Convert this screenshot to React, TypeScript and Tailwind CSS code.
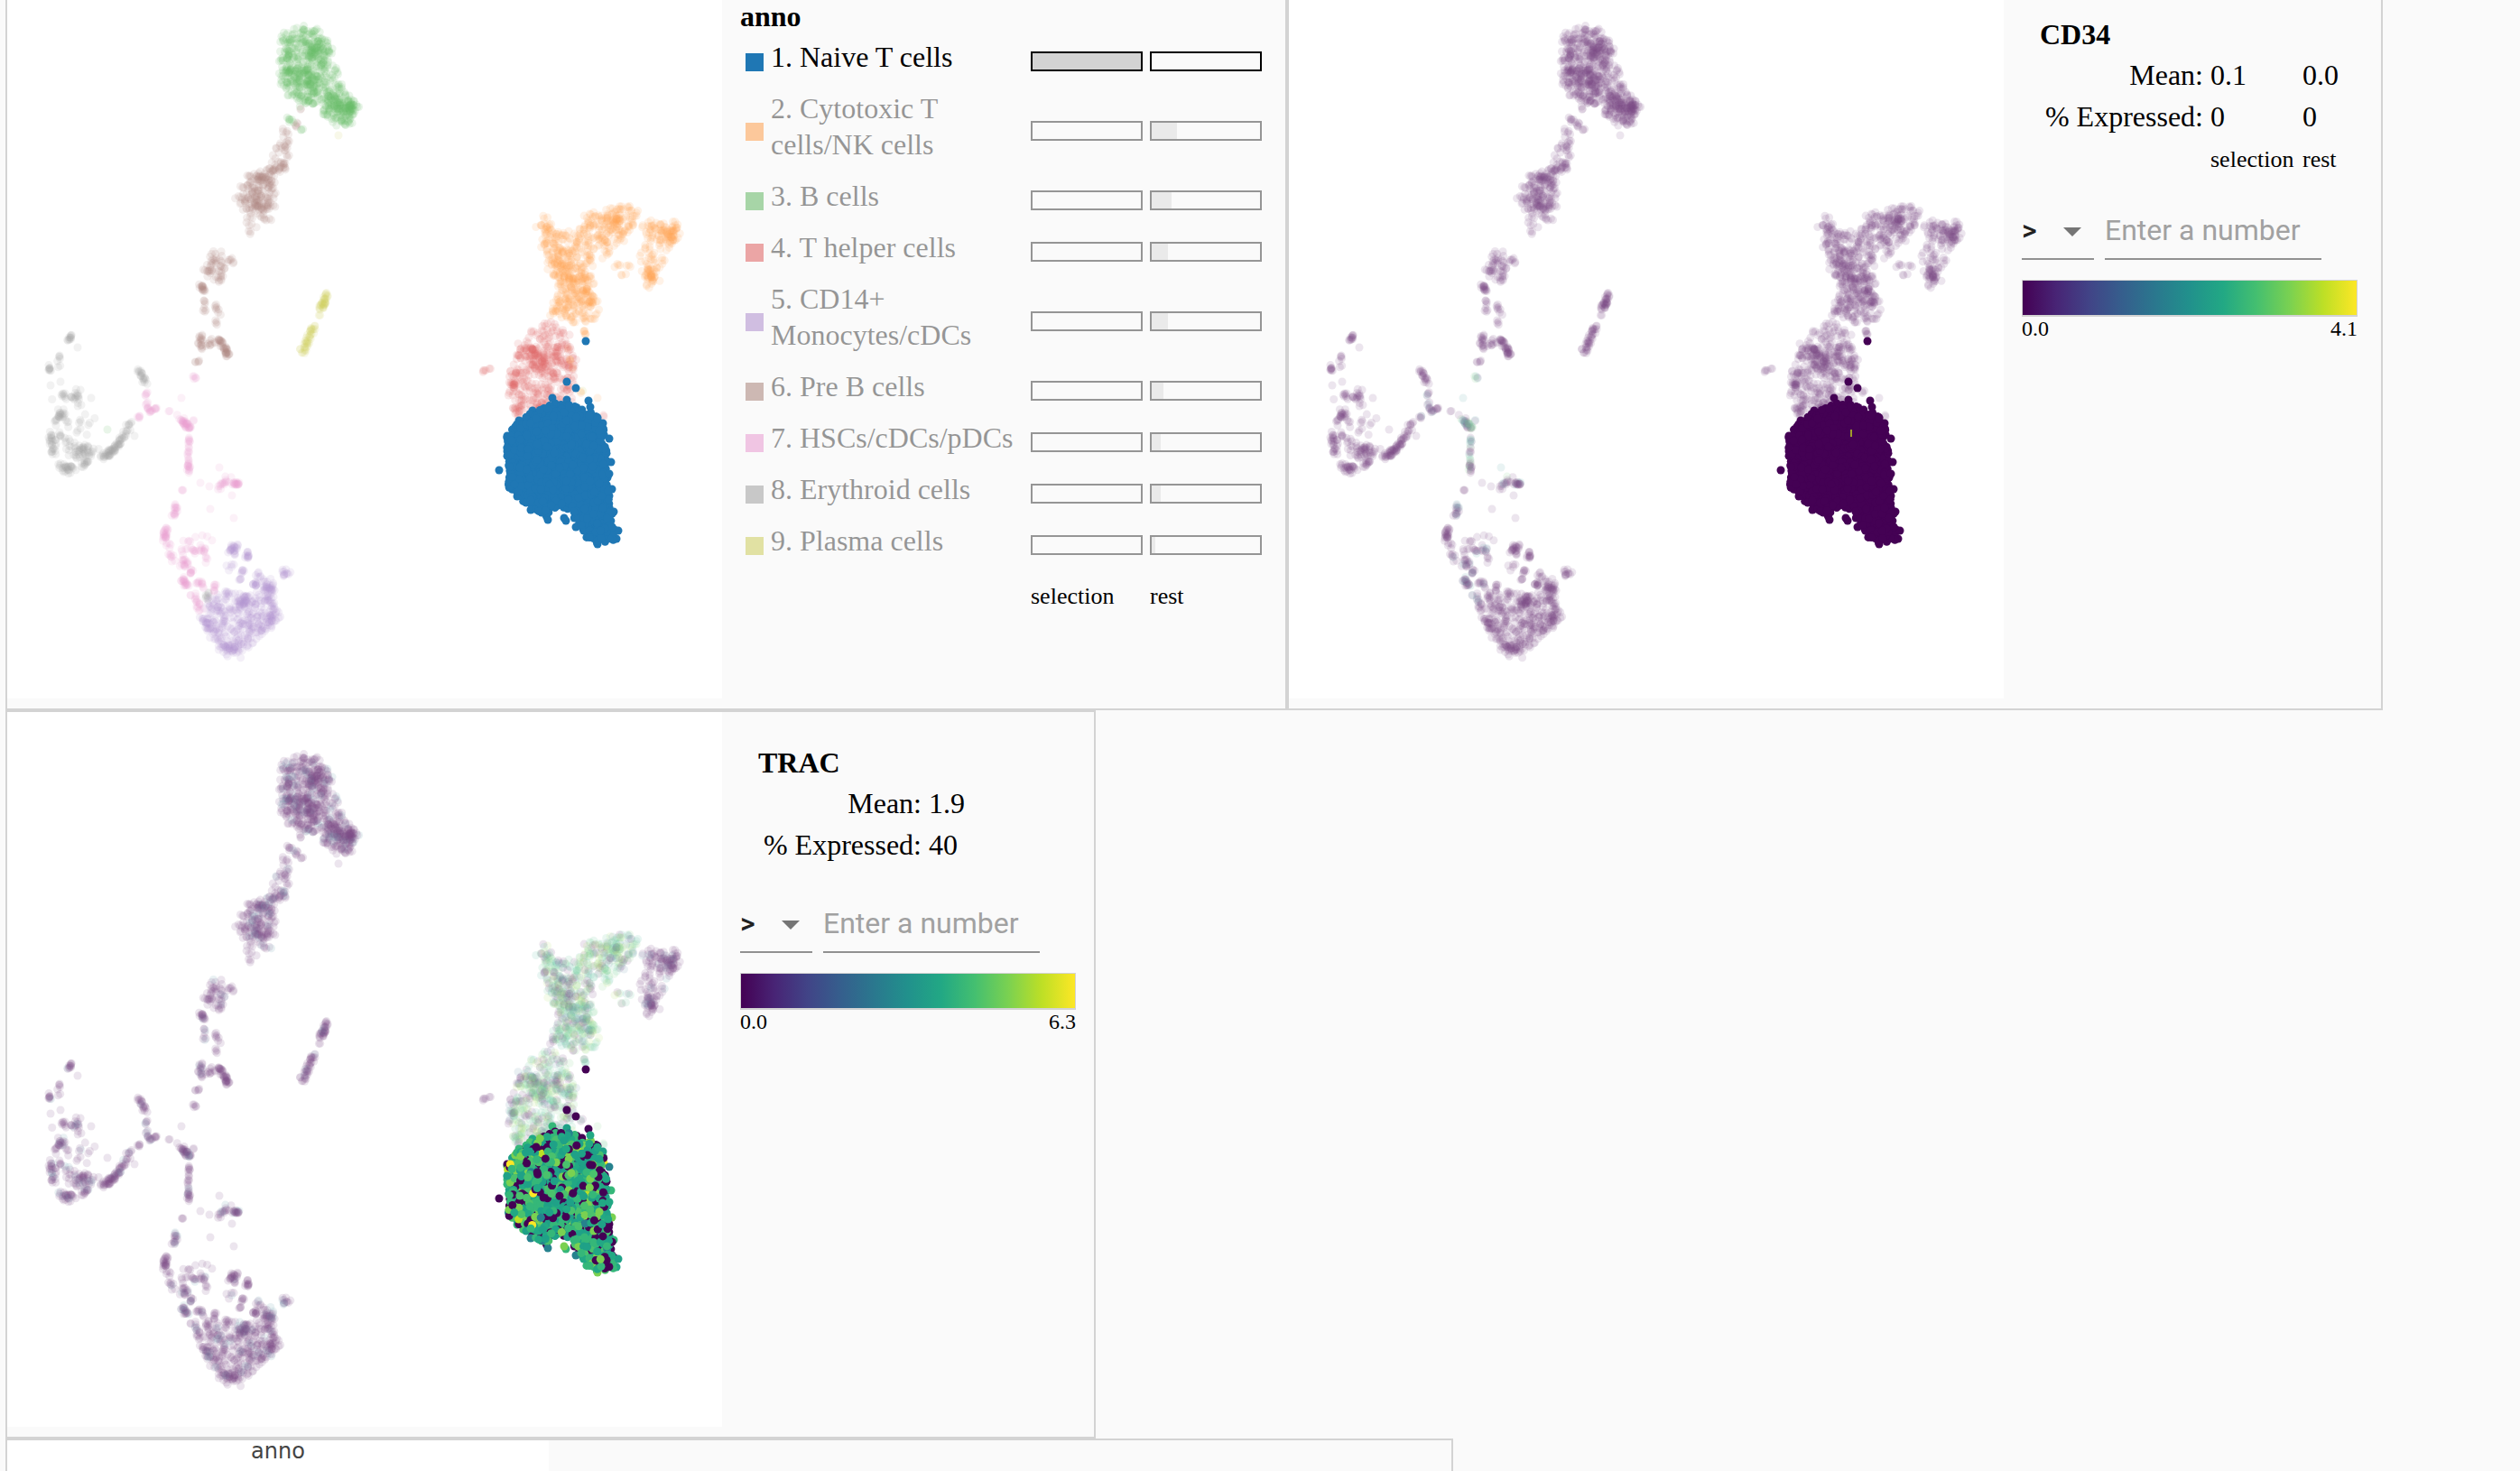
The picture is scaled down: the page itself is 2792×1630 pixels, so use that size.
import React from "react";

type Kind = "naive" | "cytotoxic" | "bcell" | "helper" | "mono" | "preb" | "hsc" | "eryth" | "plasma";
type Pt = { x: number; y: number; kind: Kind };

function makeRandom(seed: number) {
  let a = seed;
  return () => {
    a = (a + 0x6d2b79f5) | 0;
    let t = Math.imul(a ^ (a >>> 15), 1 | a);
    t = (t + Math.imul(t ^ (t >>> 7), 61 | t)) ^ t;
    return ((t ^ (t >>> 14)) >>> 0) / 4294967296;
  };
}

/* Capsules: x1, y1, x2, y2, spread, count */
const STROKES: [Kind, number[][]][] = [
  ["bcell", [[387, 115, 388, 124, 6, 30], [321, 79, 322, 80, 2, 7], [334, 85, 345, 95, 8, 20], [345, 45, 352, 60, 9, 24], [350, 100, 375, 112, 8, 20], [320, 128, 322, 135, 5, 7], [334, 143, 334, 143, 2, 3], [119, 476, 119, 476, 0, 1]]],
  ["preb", [[272, 220, 295, 230, 5, 28], [286, 200, 300, 196, 4, 14], [275, 258, 278, 258, 2, 3], [329, 138, 327, 139, 3, 5], [333, 121, 333, 121, 1, 2], [260, 284, 252, 297, 4, 7], [222, 315, 225, 324, 3, 16], [223, 333, 226, 345, 4, 8], [238, 337, 244, 350, 3, 8], [239, 355, 241, 364, 1, 4], [221, 367, 223, 387, 3, 18], [233, 378, 233, 380, 6, 10], [243, 377, 253, 394, 3, 38], [219, 399, 218, 401, 2, 5]]],
  ["plasma", [[362, 326, 356, 341, 3, 34], [354, 349, 354, 349, 1, 2], [347, 363, 335, 389, 4, 42], [375, 150, 375, 150, 0, 1], [645, 433, 645, 433, 1, 1]]],
  ["eryth", [[80, 372, 74, 379, 2, 12], [86, 385, 86, 385, 0, 1], [64, 394, 65, 406, 3, 7], [55, 406, 55, 412, 2, 9], [56, 427, 56, 427, 0, 1], [67, 423, 67, 423, 0, 1], [70, 438, 70, 438, 3, 7], [84, 435, 84, 447, 6, 18], [101, 441, 101, 441, 0, 1], [70, 457, 60, 470, 4, 20], [57, 480, 60, 503, 4, 28], [68, 483, 68, 483, 2, 4], [64, 515, 80, 522, 5, 30], [78, 497, 105, 505, 10, 52], [90, 518, 97, 510, 3, 11], [112, 507, 127, 498, 4, 34], [127, 498, 139, 478, 3, 30], [139, 478, 149, 465, 4, 9], [149, 483, 149, 483, 0, 1], [153, 408, 161, 425, 3, 20], [230, 659, 231, 662, 4, 8]]],
  ["hsc", [[163, 434, 160, 440, 1, 5], [154, 461, 153, 462, 2, 5], [163, 447, 165, 456, 2, 10], [165, 456, 174, 452, 2, 8], [186, 455, 188, 456, 1, 2], [197, 459, 210, 476, 3, 34], [209, 483, 209, 524, 2, 30], [214, 466, 214, 466, 1, 2], [202, 541, 202, 546, 1, 3], [197, 557, 191, 574, 3, 16], [184, 586, 182, 598, 3, 22], [184, 600, 191, 620, 4, 14], [203, 612, 228, 607, 5, 22], [200, 598, 232, 597, 4, 8], [228, 618, 228, 625, 2, 4], [203, 625, 205, 623, 5, 16], [212, 633, 212, 633, 3, 8], [203, 642, 207, 651, 3, 20], [217, 643, 226, 650, 3, 11], [214, 658, 223, 676, 4, 18], [238, 645, 238, 655, 2, 8], [258, 536, 264, 536, 2, 18], [243, 543, 253, 530, 4, 16], [243, 518, 243, 518, 0, 1], [222, 535, 222, 535, 0, 1], [232, 539, 232, 539, 0, 1], [233, 564, 233, 564, 0, 1], [257, 549, 257, 549, 0, 1], [259, 574, 259, 574, 0, 1], [201, 441, 201, 441, 0, 1], [214, 412, 216, 419, 2, 5]]],
  ["mono", [[261, 601, 257, 614, 5, 24], [273, 615, 273, 615, 4, 11], [268, 634, 268, 634, 3, 6], [250, 630, 283, 622, 7, 6], [262, 640, 270, 645, 4, 4], [287, 637, 287, 637, 4, 6], [316, 634, 317, 634, 5, 12], [282, 647, 282, 647, 3, 11], [297, 645, 300, 672, 7, 50], [266, 668, 279, 664, 6, 30], [248, 715, 266, 712, 11, 22], [226, 685, 233, 698, 4, 22], [302, 680, 299, 690, 5, 20], [253, 656, 253, 656, 1, 1]]],
  ["cytotoxic", [[741, 252, 744, 268, 6, 26], [719, 296, 721, 314, 6, 34], [624, 285, 632, 300, 9, 26], [634, 306, 650, 330, 9, 24], [676, 247, 690, 243, 5, 16], [645, 362, 648, 372, 3, 6], [643, 433, 645, 438, 1, 2], [662, 441, 662, 441, 0, 1], [630, 380, 633, 408, 3, 5]]],
  ["helper", [[584, 387, 602, 405, 8, 46], [570, 424, 570, 428, 3, 10], [533, 413, 548, 408, 2, 6], [668, 460, 669, 463, 1, 2]]],
];

/* Regions: number of points, then the outline as x,y pairs */
const REGIONS: [Kind, number, number[]][] = [
  ["bcell", 450, [313, 37, 332, 30, 353, 32, 362, 42, 370, 63, 373, 80, 363, 97, 350, 115, 333, 115, 320, 103, 312, 90, 310, 53]],
  ["bcell", 165, [363, 97, 380, 92, 391, 107, 395, 120, 388, 137, 373, 140, 357, 128, 360, 113]],
  ["preb", 62, [315, 143, 323, 143, 322, 160, 315, 187, 300, 198, 297, 190, 303, 170, 311, 155]],
  ["preb", 150, [270, 197, 283, 193, 297, 187, 306, 207, 301, 230, 295, 247, 287, 251, 275, 247, 268, 230, 263, 217]],
  ["preb", 52, [237, 275, 240, 275, 248, 292, 249, 308, 238, 316, 227, 308, 228, 297, 233, 288]],
  ["eryth", 26, [60, 430, 85, 440, 107, 467, 113, 490, 75, 500, 60, 470]],
  ["mono", 300, [230, 660, 270, 653, 297, 660, 308, 677, 304, 695, 292, 707, 274, 720, 260, 728, 245, 722, 229, 702, 220, 680]],
  ["cytotoxic", 400, [595, 238, 607, 243, 620, 257, 640, 257, 653, 277, 657, 313, 663, 352, 643, 358, 610, 347, 617, 320, 607, 287, 598, 253]],
  ["cytotoxic", 175, [643, 243, 657, 237, 677, 230, 703, 227, 707, 247, 690, 267, 663, 275, 653, 280, 643, 257]],
  ["cytotoxic", 70, [710, 248, 743, 243, 755, 250, 750, 262, 743, 273, 723, 266]],
  ["cytotoxic", 42, [713, 265, 735, 268, 736, 285, 728, 310, 715, 315, 708, 300]],
  ["cytotoxic", 16, [665, 275, 690, 285, 705, 295, 700, 308, 680, 312, 668, 300]],
  ["helper", 400, [610, 353, 627, 363, 634, 387, 638, 413, 633, 443, 590, 460, 575, 465, 569, 460, 564, 443, 565, 413, 575, 380, 590, 367]],
];

const SELECTED_OUTLINE = [588, 457, 610, 449, 628, 446, 642, 451, 655, 456, 663, 462, 669, 472, 672, 488, 673, 513, 674, 543, 678, 567, 683, 592, 679, 600, 662, 602, 647, 594, 640, 580, 630, 566, 616, 563, 605, 574, 588, 563, 574, 551, 562, 538, 560, 513, 561, 485, 573, 467];
const SELECTED_EDGE = [562, 483, 575, 466, 590, 455, 612, 441, 615, 447, 628, 443, 652, 444, 654, 451, 649, 378, 628, 423, 638, 430, 553, 521, 675, 486, 677, 512, 675, 525, 678, 542, 680, 567, 685, 588, 683, 597, 662, 603, 625, 574, 627, 577, 638, 584, 588, 565, 607, 576, 573, 550, 668, 469, 562, 500, 564, 538];

function inside(x: number, y: number, p: number[]) {
  let hit = false;
  for (let i = 0, j = p.length - 2; i < p.length; j = i, i += 2) {
    const xi = p[i], yi = p[i + 1], xj = p[j], yj = p[j + 1];
    if (yi > y !== yj > y && x < ((xj - xi) * (y - yi)) / (yj - yi) + xi) hit = !hit;
  }
  return hit;
}

function shuffle<T>(list: T[], rnd: () => number) {
  for (let i = list.length - 1; i > 0; i--) {
    const j = Math.floor(rnd() * (i + 1));
    [list[i], list[j]] = [list[j], list[i]];
  }
  return list;
}

function bounds(p: number[]) {
  const xs = p.filter((_, i) => i % 2 === 0);
  const ys = p.filter((_, i) => i % 2 === 1);
  return [Math.min(...xs), Math.min(...ys), Math.max(...xs), Math.max(...ys)];
}

function buildPoints() {
  const rnd = makeRandom(7);
  const rest: Pt[] = [];
  for (const [kind, count, outline] of REGIONS) {
    const [x0, y0, x1, y1] = bounds(outline);
    let n = 0;
    while (n < count) {
      const x = x0 + rnd() * (x1 - x0);
      const y = y0 + rnd() * (y1 - y0);
      if (inside(x, y, outline)) {
        rest.push({ x: x + (rnd() - 0.5) * 8, y: y + (rnd() - 0.5) * 8, kind });
        n++;
      }
    }
  }
  for (const [kind, list] of STROKES) {
    for (const [x1, y1, x2, y2, spread, count] of list) {
      for (let i = 0; i < count; i++) {
        const t = rnd();
        const a = rnd() * Math.PI * 2;
        const r = Math.sqrt(rnd()) * spread;
        rest.push({ x: x1 + (x2 - x1) * t + Math.cos(a) * r, y: y1 + (y2 - y1) * t + Math.sin(a) * r, kind });
      }
    }
  }
  const picked: Pt[] = [];
  const [bx0, by0, bx1, by1] = bounds(SELECTED_OUTLINE);
  for (let y = by0; y <= by1; y += 4) {
    for (let x = bx0; x <= bx1; x += 4) {
      const px = x + (rnd() - 0.5) * 4;
      const py = y + (rnd() - 0.5) * 4;
      if (inside(px, py, SELECTED_OUTLINE)) picked.push({ x: px, y: py, kind: "naive" });
    }
  }
  for (let i = 0; i < SELECTED_EDGE.length; i += 2) {
    picked.push({ x: SELECTED_EDGE[i], y: SELECTED_EDGE[i + 1], kind: "naive" });
  }
  return { rest: shuffle(rest, rnd), picked: shuffle(picked, rnd) };
}

const POINTS = buildPoints();

const KIND_COLOR: Record<Kind, string> = {
  naive: "#1f77b4",
  cytotoxic: "#ff7f0e",
  bcell: "#2ca02c",
  helper: "#d62728",
  mono: "#9467bd",
  preb: "#8c564b",
  hsc: "#e377c2",
  eryth: "#7f7f7f",
  plasma: "#bcbd22",
};

type Colorer = (p: Pt, r: number) => string;

const colorByKind: Colorer = (p) => KIND_COLOR[p.kind];

const colorByCD34: Colorer = (p, r) => {
  if (p.kind === "hsc" && p.x > 190 && p.y < 530 && r < 0.5) return r < 0.2 ? "#5ec962" : "#21918c";
  if (p.kind === "hsc" && r < 0.1) return "#21918c";
  return "#440154";
};

const colorByTRAC: Colorer = (p, r) => {
  if (p.kind === "naive") {
    if (p.y < 441 || r < 0.28) return "#440154";
    if (r < 0.46) return "#1fa187";
    if (r < 0.58) return "#22a884";
    if (r < 0.75) return "#35b779";
    if (r < 0.87) return "#4ac16d";
    if (r < 0.95) return "#7ad151";
    if (r < 0.975) return "#26828e";
    return r < 0.988 ? "#bddf26" : "#fde725";
  }
  if ((p.kind === "cytotoxic" && p.x < 708) || (p.kind === "helper" && p.x > 555)) {
    if (r < 0.22) return "#440154";
    if (r < 0.28) return "#31688e";
    if (r < 0.44) return "#22a884";
    if (r < 0.64) return "#35b779";
    if (r < 0.88) return "#5ec962";
    return "#a0da39";
  }
  return r < 0.08 ? "#2a788e" : "#440154";
};

function Scatter({ label, color, marked }: { label: string; color: Colorer; marked?: boolean }) {
  const rnd = makeRandom(23);
  return (
    <svg role="img" aria-label={label} viewBox="8 -18 792 792" className="size-[792px] shrink-0 bg-white">
      <g fillOpacity={0.14} opacity={0.7}>
        {POINTS.rest.map((p, i) => (
          <circle key={i} cx={p.x.toFixed(1)} cy={p.y.toFixed(1)} r={4.5} fill={color(p, rnd())} />
        ))}
      </g>
      {POINTS.picked.map((p, i) => (
        <circle key={i} cx={p.x.toFixed(1)} cy={p.y.toFixed(1)} r={4.5} fill={color(p, rnd())} />
      ))}
      {marked && <rect x={630} y={476} width={2} height={8} fill="#a09c2c" />}
    </svg>
  );
}

type Category = { name: string; swatch: string; selection: number; rest: number };

const CATEGORIES: Category[] = [
  { name: "1. Naive T cells", swatch: "bg-[#1f77b4]", selection: 100, rest: 0 },
  { name: "2. Cytotoxic T\ncells/NK cells", swatch: "bg-[#ff7f0e]", selection: 0, rest: 23 },
  { name: "3. B cells", swatch: "bg-[#2ca02c]", selection: 0, rest: 18 },
  { name: "4. T helper cells", swatch: "bg-[#d62728]", selection: 0, rest: 15 },
  { name: "5. CD14+\nMonocytes/cDCs", swatch: "bg-[#9467bd]", selection: 0, rest: 15 },
  { name: "6. Pre B cells", swatch: "bg-[#8c564b]", selection: 0, rest: 11 },
  { name: "7. HSCs/cDCs/pDCs", swatch: "bg-[#e377c2]", selection: 0, rest: 8 },
  { name: "8. Erythroid cells", swatch: "bg-[#7f7f7f]", selection: 0, rest: 8 },
  { name: "9. Plasma cells", swatch: "bg-[#bcbd22]", selection: 0, rest: 3 },
];

function Bar({ value }: { value: number }) {
  return (
    <div className="h-[22px] w-[124px] border-2 border-black">
      <div className="h-full bg-[#d3d3d3]" style={{ width: `${value}%` }} />
    </div>
  );
}

function CategoryLegend() {
  return (
    <div className="pt-4 pr-[26px] pl-5">
      <h2 className="text-[32px] leading-[40px] font-bold">anno</h2>
      <table className="mt-[2px] border-collapse text-left">
        <tbody>
          {CATEGORIES.map((c) => (
            <tr key={c.name} className={c.selection > 0 ? "" : "opacity-40"}>
              <td className="p-0 pl-[6px]">
                <div className={`size-5 ${c.swatch}`} />
              </td>
              <th scope="row" className="w-[296px] pt-[3px] pb-[14px] pl-2 text-[32px] leading-[40px] font-normal whitespace-pre">
                {c.name}
              </th>
              <td className="p-0 pr-2 pb-px">
                <Bar value={c.selection} />
              </td>
              <td className="p-0 pb-px">
                <Bar value={c.rest} />
              </td>
            </tr>
          ))}
        </tbody>
        <tfoot>
          <tr className="text-[26px] leading-[30px]">
            <td colSpan={2} />
            <th scope="col" className="pt-[13px] font-normal">selection</th>
            <th scope="col" className="pt-[13px] font-normal">rest</th>
          </tr>
        </tfoot>
      </table>
    </div>
  );
}

type GeneProps = { gene: string; mean: string[]; expressed: string[]; max: string; columns?: string[] };

function GeneLegend({ gene, mean, expressed, max, columns }: GeneProps) {
  return (
    <div className={columns ? "pt-[34px] pr-[26px] pl-5" : "pt-[34px] pr-5 pl-5"}>
      <h2 className="pl-5 text-[32px] leading-[44px] font-bold">{gene}</h2>
      <table className="ml-5 border-collapse text-left text-[32px] leading-[46px]">
        <tbody>
          <tr>
            <th scope="row" className="w-[181px] p-0 text-right font-normal whitespace-nowrap">Mean:</th>
            {mean.map((v, i) => <td key={i} className="p-0 pl-2">{v}</td>)}
          </tr>
          <tr>
            <th scope="row" className="p-0 text-right font-normal whitespace-nowrap">% Expressed:</th>
            {expressed.map((v, i) => <td key={i} className="p-0 pl-2">{v}</td>)}
          </tr>
        </tbody>
        {columns && (
          <tfoot>
            <tr className="text-[26px] leading-[28px]">
              <td />
              {columns.map((c, i) => (
                <th key={c} scope="col" className={i === 0 ? "min-w-[102px] p-0 pt-[11px] pl-2 font-normal" : "p-0 pt-[11px] pl-2 font-normal"}>
                  {c}
                </th>
              ))}
            </tr>
          </tfoot>
        )}
      </table>
      <div className="mt-[33px] flex gap-3 font-['Roboto',sans-serif] text-[32px]">
        <div className="relative w-20">
          <select
            aria-label={`${gene} comparison`}
            className="h-16 w-full appearance-none border-b-2 border-[#919191] bg-transparent text-[32px] font-medium text-[#212121] outline-none"
          >
            <option>&gt;</option>
            <option>&lt;</option>
            <option>=</option>
          </select>
          <svg viewBox="0 0 24 24" aria-hidden="true" className="pointer-events-none absolute top-2 right-0 size-12 fill-[#757575]">
            <path d="M7 10l5 5 5-5z" />
          </svg>
        </div>
        <input
          type="text"
          inputMode="decimal"
          aria-label={`${gene} threshold`}
          placeholder="Enter a number"
          className="h-16 w-60 border-b-2 border-[#919191] bg-transparent text-[32px] outline-none placeholder:text-[#a1a1a1]"
        />
      </div>
      <div className="mt-[22px] h-[41px] w-[372px] border border-b-2 border-[#d3d3d3] bg-[linear-gradient(to_right,#440154,#482475,#414487,#355f8d,#2a788e,#21918c,#22a884,#44bf70,#7ad151,#bddf26,#fde725)]" />
      <div className="flex w-[372px] justify-between text-[24px] leading-[26px]">
        <span>0.0</span>
        <span>{max}</span>
      </div>
    </div>
  );
}

function Card({ children }: { children: React.ReactNode }) {
  return <section className="flex border-2 border-[#d3d3d3] pb-[11px]">{children}</section>;
}

export default function App() {
  return (
    <main className="h-screen overflow-hidden bg-[#fafafa] font-['Liberation_Serif',serif] text-black">
      <div className="-mt-5 flex flex-wrap items-start pl-[6px]">
        <Card>
          <Scatter label="anno embedding" color={colorByKind} />
          <CategoryLegend />
        </Card>
        <Card>
          <Scatter label="CD34 embedding" color={colorByCD34} marked />
          <GeneLegend gene="CD34" mean={["0.1", "0.0"]} expressed={["0", "0"]} max="4.1" columns={["selection", "rest"]} />
        </Card>
        <Card>
          <Scatter label="TRAC embedding" color={colorByTRAC} />
          <GeneLegend gene="TRAC" mean={["1.9"]} expressed={["40"]} max="6.3" />
        </Card>
        <section className="flex w-[1604px] border-2 border-[#d3d3d3]">
          <div className="h-[600px] w-[600px] bg-white text-center font-['DejaVu_Sans',sans-serif] text-[24px] leading-6 text-[#444]">
            anno
          </div>
        </section>
      </div>
    </main>
  );
}
